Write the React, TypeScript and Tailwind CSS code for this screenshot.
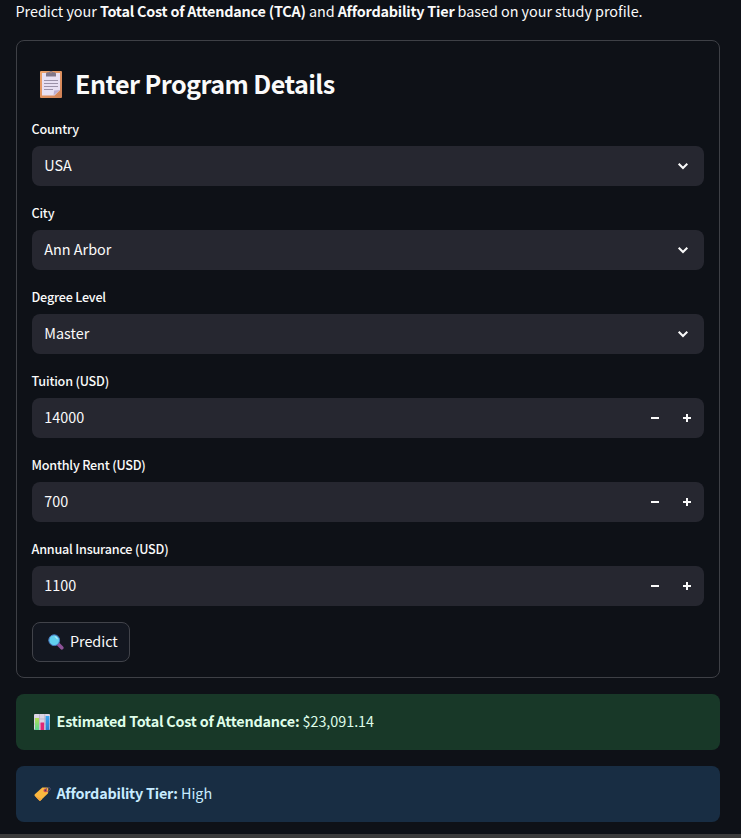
import type { ReactNode } from "react";

const Clipboard = () => (
  <svg className="block h-[28px] w-[22px] shrink-0" viewBox="0 0 22 28">
    <defs>
      <linearGradient id="board" x1="0" y1="0" x2="1" y2="1">
        <stop offset="0" stopColor="#f0a56c" />
        <stop offset="1" stopColor="#cf8055" />
      </linearGradient>
    </defs>
    <rect x="0" y="1" width="22" height="27" rx="1" fill="url(#board)" />
    <path d="M2 3h18v17l-5.5 5.5H2z" fill="#e8e0f3" />
    <path d="M20 20l-6.5 5.5.6-5z" fill="#bdaed2" />
    <path d="M4 10.5h14M4 13.5h14M4 16.5h14M4 19.5h9" stroke="#9b92a9" strokeWidth="1" />
    <path d="M6 6.5V3.7q0-1.5 1.5-1.5h1.7a1.9 1.9 0 0 1 3.6 0h1.7Q16 2.2 16 3.7v2.8z" fill="#81778a" />
    <circle cx="11" cy="2.6" r=".7" fill="#e49a68" />
  </svg>
);

const Magnifier = () => (
  <svg className="block size-4 shrink-0" viewBox="0 0 16 16">
    <path d="M9.8 9.8l4 4" stroke="#8d5297" strokeWidth="3.6" strokeLinecap="round" />
    <circle cx="6.2" cy="6.2" r="5.4" fill="#61d0ef" stroke="#4b78c0" strokeWidth="1" />
    <path d="M7.2 2.8a3.5 3.5 0 0 1 2 2" stroke="#b3edfa" strokeWidth="1.2" fill="none" strokeLinecap="round" />
  </svg>
);

const Chart = () => (
  <svg className="block size-4 shrink-0" viewBox="0 0 16 16">
    <defs>
      <linearGradient id="green" x1="0" y1="0" x2="0" y2="1">
        <stop offset="0" stopColor="#b4df55" />
        <stop offset="1" stopColor="#59d493" />
      </linearGradient>
      <linearGradient id="blue" x1="0" y1="0" x2="0" y2="1">
        <stop offset="0" stopColor="#39a9f2" />
        <stop offset="1" stopColor="#2a7bd0" />
      </linearGradient>
    </defs>
    <rect width="16" height="16" rx="1" fill="#dcd5e4" />
    <path d="M0 5h16M0 10h16M5.5 0v16M10.7 0v16" stroke="#b9afc4" strokeWidth=".7" />
    <rect x="1" y="4" width="4" height="12" fill="url(#green)" />
    <rect x="6.5" y="8.5" width="3.6" height="7.5" fill="#df2877" />
    <rect x="11.6" y="2" width="3.8" height="14" fill="url(#blue)" />
  </svg>
);

const Tag = () => (
  <svg className="block h-4 w-[17px] shrink-0" viewBox="0 0 17 16">
    <path d="M8.3 1.6l4.9-.1q1 .1 1.1 1.1l-.2 4.6-7.5 7.2q-.7.6-1.4 0L.7 9.7q-.6-.7.1-1.4z" fill="#fbb83f" />
    <path d="M.7 9.7l4.5 4.7q.7.6 1.4 0l1.6-1.5z" fill="#f1a53e" />
    <circle cx="11.4" cy="4.4" r="1.9" fill="#d94c50" />
    <circle cx="11.4" cy="4.4" r=".8" fill="#36405b" />
    <path d="M11.5 4.3C12 1.6 15.5.6 16.2 2.3c.6 1.8-1.5 3.5-3 3.4" stroke="#64567f" strokeWidth=".8" fill="none" />
  </svg>
);

const Chevron = () => (
  <svg className="mr-[15px] block h-3 w-3" viewBox="0 0 12 12" fill="none">
    <path d="M1.7 3.7L6 8l4.3-4.3" stroke="#fafafa" strokeWidth="2" />
  </svg>
);

const Stepper = () => (
  <div className="flex pr-px">
    <button aria-label="Decrease" className="flex h-10 w-8 items-center justify-center">
      <svg className="block size-2" viewBox="0 0 8 8"><path d="M0 3h8v2H0z" fill="#fafafa" /></svg>
    </button>
    <button aria-label="Increase" className="flex h-10 w-8 items-center justify-center">
      <svg className="block size-2" viewBox="0 0 8 8"><path d="M0 3h3V0h2v3h3v2H5v3H3V5H0z" fill="#fafafa" /></svg>
    </button>
  </div>
);

function Field({ label, value, numeric }: { label: string; value: string; numeric?: boolean }) {
  return (
    <div className="mb-4">
      <div className="mb-[5px] -ml-[0.5px] h-[23px] text-[12.6px] leading-[22px] font-medium tracking-[-0.2px]">{label}</div>
      <div className="flex h-10 items-center justify-between rounded-lg bg-[#262730] pl-3">
        <span className="pb-0.5 pl-[0.3px] text-[14.4px] leading-6">{value}</span>
        {numeric ? <Stepper /> : <Chevron />}
      </div>
    </div>
  );
}

function Strong({ children }: { children: ReactNode }) {
  return <b className="tracking-[-0.22px]">{children}</b>;
}

function Notice({ className, icon, children }: { className: string; icon: ReactNode; children: ReactNode }) {
  return (
    <div className={"mt-4 flex h-14 items-center rounded-lg pl-[18px] text-[14.4px] leading-6 tracking-[-0.05px] " + className}>
      {icon}
      <span className="pb-0.5">{children}</span>
    </div>
  );
}

export default function App() {
  return (
    <main className="flex h-[838px] w-[741px] flex-col overflow-hidden bg-[#0e1117] font-['Noto_Sans_CJK_SC','Noto_Sans',sans-serif] text-[#fafafa]">
      <div className="h-[834px] pl-4">
        <p className="-ml-[0.5px] h-10 text-[14.4px] leading-[22px] tracking-[-0.04px] whitespace-nowrap">
          Predict your <Strong>Total Cost of Attendance (TCA)</Strong> and <Strong>Affordability Tier</Strong> based on your study profile.
        </p>
        <section className="h-[638px] w-[704px] rounded-lg border border-[#3e4046] px-[15px] pt-[23px]">
          <h2 className="mb-[14px] flex h-10 items-center pl-2 text-[25.2px] leading-10 font-bold tracking-[-0.58px]">
            <Clipboard />
            <span className="ml-[13px] pb-0.5">Enter Program Details</span>
          </h2>
          <Field label="Country" value="USA" />
          <Field label="City" value="Ann Arbor" />
          <Field label="Degree Level" value="Master" />
          <Field label="Tuition (USD)" value="14000" numeric />
          <Field label="Monthly Rent (USD)" value="700" numeric />
          <Field label="Annual Insurance (USD)" value="1100" numeric />
          <button className="flex h-10 w-[98px] items-center rounded-lg border border-[#41434a] bg-[#131720] pl-[15px] text-[14.4px]">
            <Magnifier /><span className="ml-[6px] pb-0.5 tracking-[-0.05px]">Predict</span>
          </button>
        </section>
        <Notice className="w-[704px] bg-[#183828] text-[#dffde9]" icon={<Chart />}>
          <span className="ml-[6.5px]"><Strong>Estimated Total Cost of Attendance:</Strong> $23,091.14</span>
        </Notice>
        <Notice className="w-[704px] bg-[#182d43] text-[#c7ebff]" icon={<Tag />}>
          <span className="ml-[5.5px]"><Strong>Affordability Tier:</Strong> High</span>
        </Notice>
      </div>
      <div className="h-1 bg-[#3b3b3b]" />
    </main>
  );
}
